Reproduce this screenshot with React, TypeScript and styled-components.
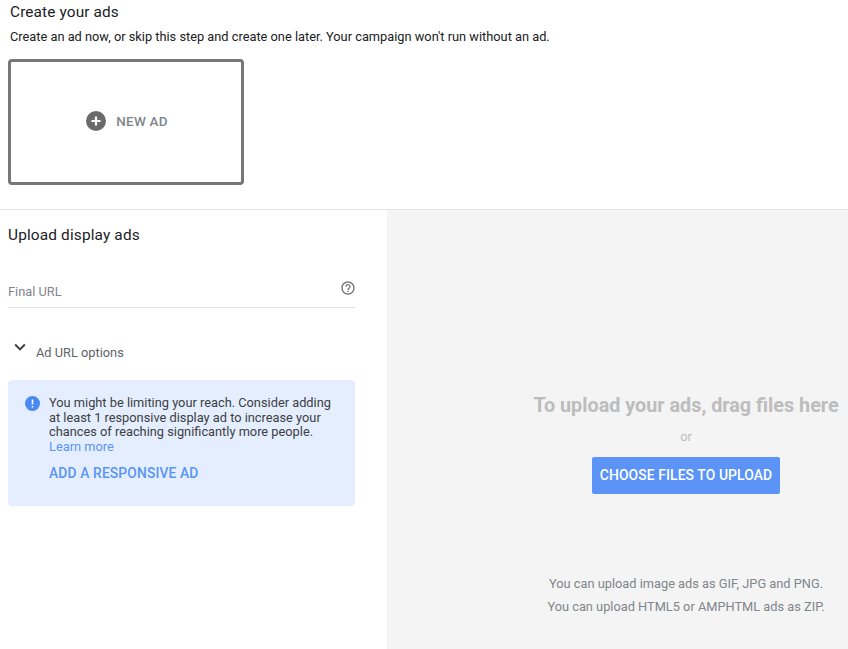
import React from "react";
import styled, { createGlobalStyle } from "styled-components";

const Global = createGlobalStyle`
  html, body { margin: 0; padding: 0; background: #fff; }
  body { font-family: Roboto, "Liberation Sans", sans-serif; width: 848px; height: 649px; overflow: hidden; }
  * { box-sizing: border-box; }
`;

const Page = styled.div`
  width: 848px;
  height: 649px;
  display: flex;
  flex-direction: column;
`;

const TopSection = styled.section`
  height: 210px;
  flex: none;
  border-bottom: 1px solid #e4e4e4;
  padding: 3px 8px 0;
`;

const Title = styled.h2`
  margin: 0 0 0 2px;
  font-size: 15.4px;
  line-height: 18px;
  font-weight: 400;
  letter-spacing: 0.12px;
  color: #202124;
`;

const Subtitle = styled.p`
  margin: 7px 0 0 2px;
  font-size: 12.8px;
  line-height: 18px;
  color: #202124;
`;

const NewAdCard = styled.button`
  margin-top: 13px;
  width: 236px;
  height: 126px;
  border: 3px solid #777;
  border-radius: 4px;
  background: #fff;
  display: flex;
  align-items: center;
  justify-content: center;
  gap: 10px;
  padding: 0 0 2px 2px;
  font-family: inherit;
  font-size: 13.5px;
  font-weight: 500;
  letter-spacing: 0.2px;
  color: #80868b;
`;

const Columns = styled.div`
  flex: 1;
  display: flex;
  min-height: 0;
`;

const LeftPane = styled.section`
  width: 387px;
  flex: none;
  padding: 15px 32px 0 8px;
`;

const PaneTitle = styled.h3`
  margin: 0;
  font-size: 15.4px;
  line-height: 20px;
  font-weight: 400;
  letter-spacing: 0.15px;
  color: #202124;
`;

const UrlField = styled.div`
  margin-top: 35px;
  height: 28px;
  display: flex;
  justify-content: space-between;
  border-bottom: 1px solid #e4e4e4;
  font-size: 12.8px;
  line-height: 24px;
  color: #80868b;
`;

const HelpIcon = styled.svg`
  width: 16px;
  height: 16px;
  margin: 0 -0.5px 0 0;
  color: #757575;
`;

const OptionsRow = styled.div`
  margin-top: 31px;
  height: 24px;
  display: flex;
  align-items: flex-start;
  font-size: 12.8px;
  line-height: 28px;
  color: #5f6368;
`;

const Chevron = styled.svg`
  width: 22px;
  height: 22px;
  margin: -3px 5px 0 1px;
  color: #3c4043;
  flex: none;
`;

const Notice = styled.div`
  margin-top: 17px;
  height: 126px;
  background: #e4eefe;
  border-radius: 4px;
  padding: 16px 16px 0 17px;
  display: flex;
  gap: 9px;
`;

const NoticeIcon = styled.svg`
  width: 15px;
  height: 15px;
  flex: none;
`;

const NoticeBody = styled.div`
  font-size: 12.8px;
  line-height: 14.7px;
  color: #3c4043;
`;

const LearnMore = styled.a`
  display: block;
  color: #5a95f5;
`;

const AddLink = styled.a`
  display: block;
  margin-top: 11px;
  font-size: 13.8px;
  line-height: 15px;
  font-weight: 500;
  letter-spacing: 0.15px;
  color: #5a95f5;
`;

const DropPane = styled.section`
  flex: 1;
  background: #f4f4f4;
  display: flex;
  flex-direction: column;
  align-items: center;
  padding: 183px 0 0 137px;
`;

const DropTitle = styled.div`
  font-size: 19.8px;
  line-height: 26px;
  font-weight: 700;
  color: #bdbdbd;
  white-space: nowrap;
`;

const OrText = styled.div`
  margin-top: 11px;
  font-size: 12.8px;
  line-height: 14px;
  color: #bdbdbd;
`;

const UploadButton = styled.button`
  margin-top: 13px;
  width: 188px;
  height: 37px;
  border: none;
  border-radius: 2px;
  background: #5b94f6;
  color: #fff;
  font-family: inherit;
  font-size: 13.9px;
  font-weight: 500;
  letter-spacing: 0.1px;
  padding: 0 0 2px;
`;

const Hints = styled.div`
  margin-top: 78px;
  text-align: center;
  font-size: 12.8px;
  line-height: 23px;
  color: #80868b;
`;

export default function App() {
  return (
    <Page>
      <Global />
      <TopSection>
        <Title>Create your ads</Title>
        <Subtitle>Create an ad now, or skip this step and create one later. Your campaign won't run without an ad.</Subtitle>
        <NewAdCard>
          <svg width="20" height="20" viewBox="0 0 20 20" aria-hidden="true">
            <circle cx="10" cy="10" r="10" fill="#6b6b6b" />
            <path d="M10 5.5v9M5.5 10h9" stroke="#fff" strokeWidth="2.2" />
          </svg>
          NEW AD
        </NewAdCard>
      </TopSection>
      <Columns>
        <LeftPane>
          <PaneTitle>Upload display ads</PaneTitle>
          <UrlField>
            Final URL
            <HelpIcon viewBox="0 0 24 24" aria-hidden="true">
              <path fill="currentColor" d="M11 18h2v-2h-2v2zm1-16C6.48 2 2 6.48 2 12s4.48 10 10 10 10-4.48 10-10S17.52 2 12 2zm0 18c-4.41 0-8-3.59-8-8s3.59-8 8-8 8 3.59 8 8-3.59 8-8 8zm0-14c-2.21 0-4 1.79-4 4h2c0-1.1.9-2 2-2s2 .9 2 2c0 2-3 1.75-3 5h2c0-2.25 3-2.5 3-5 0-2.21-1.79-4-4-4z" />
            </HelpIcon>
          </UrlField>
          <OptionsRow>
            <Chevron viewBox="0 0 24 24" aria-hidden="true">
              <path fill="currentColor" d="M7.41 8.59 12 13.17l4.59-4.58L18 10l-6 6-6-6z" />
            </Chevron>
            Ad URL options
          </OptionsRow>
          <Notice>
            <NoticeIcon viewBox="0 0 15 15" aria-hidden="true">
              <circle cx="7.5" cy="7.5" r="7.5" fill="#4a89f3" />
              <path d="M7.5 3.5v5M7.5 10v1.5" stroke="#fff" strokeWidth="1.6" />
            </NoticeIcon>
            <NoticeBody>
              You might be limiting your reach. Consider adding
              <br />
              at least 1 responsive display ad to increase your
              <br />
              chances of reaching significantly more people.
              <LearnMore>Learn more</LearnMore>
              <AddLink>ADD A RESPONSIVE AD</AddLink>
            </NoticeBody>
          </Notice>
        </LeftPane>
        <DropPane>
          <DropTitle>To upload your ads, drag files here</DropTitle>
          <OrText>or</OrText>
          <UploadButton>CHOOSE FILES TO UPLOAD</UploadButton>
          <Hints>
            You can upload image ads as GIF, JPG and PNG.
            <br />
            You can upload HTML5 or AMPHTML ads as ZIP.
          </Hints>
        </DropPane>
      </Columns>
    </Page>
  );
}
